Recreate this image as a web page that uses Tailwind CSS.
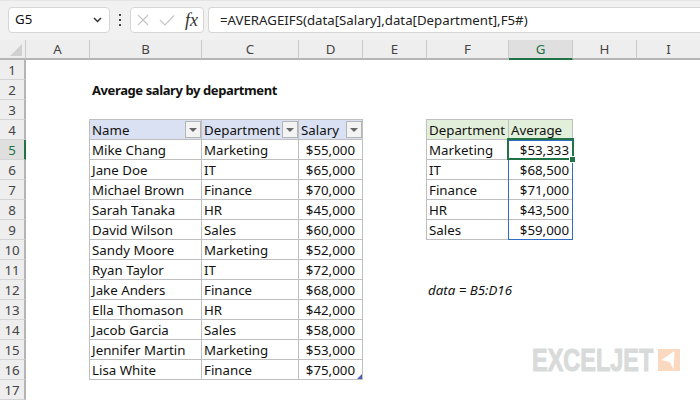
<!DOCTYPE html>
<html lang="en">
<head>
<meta charset="UTF-8">
<script src="https://cdn.jsdelivr.net/npm/@tailwindcss/browser@4"></script>
<title>Average salary by department</title>
</head>
<body class="w-[700px] h-[400px] overflow-hidden bg-white font-['Noto_Sans',sans-serif] text-[13.3px] text-[#111]">

<!-- formula bar -->
<div class="h-10 bg-[#f1f1f1] border-t border-t-[#e4e4e4] flex items-start pt-[6px] pl-2">
  <div class="w-[102px] h-[26px] bg-white border border-[#d6d6d6] rounded-[4px] flex items-center pl-[6px] pr-[7px] justify-between">
    <span>G5</span>
    <svg class="w-[9px] h-[6px]" viewBox="0 0 9 6" fill="none" stroke="#333" stroke-width="1.5"><path d="M1 1l3.5 3.5L8 1"/></svg>
  </div>
  <div class="w-5 h-[26px] flex flex-col items-center justify-center gap-[3px]">
    <i class="block w-[2px] h-[2px] bg-[#444]"></i><i class="block w-[2px] h-[2px] bg-[#444]"></i><i class="block w-[2px] h-[2px] bg-[#444]"></i>
  </div>
  <div class="w-[74px] h-[26px] bg-white border border-[#d6d6d6] rounded-[4px] flex items-center pl-[6px]">
    <svg class="w-3 h-3" viewBox="0 0 12 12" fill="none" stroke="#c4c4c4" stroke-width="1.1"><path d="M1 1l10 10M11 1L1 11"/></svg>
    <svg class="w-4 h-3 ml-[10px]" viewBox="0 0 16 12" fill="none" stroke="#c4c4c4" stroke-width="1.1"><path d="M1 6l5 5L15 1.5"/></svg>
    <span class="font-['Liberation_Serif',serif] italic text-[18px] leading-none ml-[10px] text-[#333]">fx</span>
  </div>
  <div class="ml-1 flex-1 h-[26px] bg-white border-y border-l border-[#d6d6d6] rounded-l-[4px] pl-[11px] leading-[24px] text-[13.25px] text-[#222]">=AVERAGEIFS(data[Salary],data[Department],F5#)</div>
</div>

<!-- sheet -->
<div class="relative grid grid-cols-[26px_64px_112px_97px_64px_64px_82px_64px_64px_63px] auto-rows-[20px]">
  <!-- column headers -->
  <div class="bg-[#eeeeee] border-b-2 border-[#b5b5b5] border-r border-r-[#c8c8c8] flex items-end justify-end">
    <div class="w-0 h-0 border-l-[12px] border-l-transparent border-b-[12px] border-b-[#d0d0d0] mr-[3px] mb-[2px]"></div>
  </div>
  <div class="bg-[#eeeeee] border-b-2 border-[#b5b5b5] border-r border-r-[#c8c8c8] text-center text-[#444] leading-[19px]">A</div>
  <div class="bg-[#eeeeee] border-b-2 border-[#b5b5b5] border-r border-r-[#c8c8c8] text-center text-[#444] leading-[19px]">B</div>
  <div class="bg-[#eeeeee] border-b-2 border-[#b5b5b5] border-r border-r-[#c8c8c8] text-center text-[#444] leading-[19px]">C</div>
  <div class="bg-[#eeeeee] border-b-2 border-[#b5b5b5] border-r border-r-[#c8c8c8] text-center text-[#444] leading-[19px]">D</div>
  <div class="bg-[#eeeeee] border-b-2 border-[#b5b5b5] border-r border-r-[#c8c8c8] text-center text-[#444] leading-[19px]">E</div>
  <div class="bg-[#eeeeee] border-b-2 border-[#b5b5b5] border-r border-r-[#c8c8c8] text-center text-[#444] leading-[19px]">F</div>
  <div class="bg-[#dfdfdf] border-b-2 border-[#217346] border-r border-r-[#c8c8c8] text-center text-[#217346] leading-[19px]">G</div>
  <div class="bg-[#eeeeee] border-b-2 border-[#b5b5b5] border-r border-r-[#c8c8c8] text-center text-[#444] leading-[19px]">H</div>
  <div class="bg-[#eeeeee] border-b-2 border-[#b5b5b5] text-center text-[#444] leading-[19px]">I</div>

  <!-- row 1 -->
  <div class="col-start-1 bg-[#eeeeee] border-r-2 border-r-[#b5b5b5] border-b border-b-[#d4d4d4] text-center text-[#444] leading-[21px]">1</div>
  <!-- row 2 -->
  <div class="col-start-1 bg-[#eeeeee] border-r-2 border-r-[#b5b5b5] border-b border-b-[#d4d4d4] text-center text-[#444] leading-[21px]">2</div>
  <div class="col-start-3 col-span-3 font-bold text-[13px] tracking-[-0.4px] leading-[21px] pl-[2px]">Average salary by department</div>
  <!-- row 3 -->
  <div class="col-start-1 bg-[#eeeeee] border-r-2 border-r-[#b5b5b5] border-b border-b-[#d4d4d4] text-center text-[#444] leading-[21px]">3</div>
  <!-- row 4 -->
  <div class="col-start-1 bg-[#eeeeee] border-r-2 border-r-[#b5b5b5] border-b border-b-[#d4d4d4] text-center text-[#444] leading-[21px]">4</div>
  <div class="col-start-3 -ml-px -mt-px relative bg-[#d9e1f2] border border-[#bfbfbf] pl-[2px] leading-[21px]">Name<span class="absolute right-0 top-[1px] w-4 h-[17px] bg-[#f3f3f3] border border-[#b5b5b5] flex items-center justify-center"><i class="block w-0 h-0 border-x-[4px] border-x-transparent border-t-[4px] border-t-[#666]"></i></span></div>
  <div class="-mt-px relative bg-[#d9e1f2] border-y border-r border-[#bfbfbf] pl-[2px] leading-[21px]">Department<span class="absolute right-0 top-[1px] w-4 h-[17px] bg-[#f3f3f3] border border-[#b5b5b5] flex items-center justify-center"><i class="block w-0 h-0 border-x-[4px] border-x-transparent border-t-[4px] border-t-[#666]"></i></span></div>
  <div class="-mt-px relative bg-[#d9e1f2] border-y border-r border-[#bfbfbf] pl-[2px] leading-[21px]">Salary<span class="absolute right-0 top-[1px] w-4 h-[17px] bg-[#f3f3f3] border border-[#b5b5b5] flex items-center justify-center"><i class="block w-0 h-0 border-x-[4px] border-x-transparent border-t-[4px] border-t-[#666]"></i></span></div>
  <div class="col-start-7 -ml-px -mt-px bg-[#e2efda] border border-[#bfbfbf] pl-[2px] leading-[21px]">Department</div>
  <div class="-mt-px bg-[#e2efda] border-y border-r border-[#bfbfbf] pl-[2px] leading-[21px]">Average</div>
  <!-- row 5 -->
  <div class="col-start-1 bg-[#dfdfdf] border-r-2 border-r-[#217346] border-b border-b-[#d4d4d4] text-center text-[#217346] leading-[21px]">5</div>
  <div class="col-start-3 -ml-px border-x border-b border-[#bfbfbf] pl-[2px] leading-[21px]">Mike Chang</div>
  <div class="border-r border-b border-[#bfbfbf] pl-[2px] leading-[21px]">Marketing</div>
  <div class="border-r border-b border-[#bfbfbf] pr-[7px] text-right leading-[21px]">$55,000</div>
  <div class="col-start-7 -ml-px border-x border-b border-[#bfbfbf] pl-[2px] leading-[21px]">Marketing</div>
  <div class="border-r border-b border-[#bfbfbf] pr-[3px] text-right leading-[21px]">$53,333</div>
  <!-- row 6 -->
  <div class="col-start-1 bg-[#eeeeee] border-r-2 border-r-[#b5b5b5] border-b border-b-[#d4d4d4] text-center text-[#444] leading-[21px]">6</div>
  <div class="col-start-3 -ml-px border-x border-b border-[#bfbfbf] pl-[2px] leading-[21px]">Jane Doe</div>
  <div class="border-r border-b border-[#bfbfbf] pl-[2px] leading-[21px]">IT</div>
  <div class="border-r border-b border-[#bfbfbf] pr-[7px] text-right leading-[21px]">$65,000</div>
  <div class="col-start-7 -ml-px border-x border-b border-[#bfbfbf] pl-[2px] leading-[21px]">IT</div>
  <div class="border-r border-b border-[#bfbfbf] pr-[3px] text-right leading-[21px]">$68,500</div>
  <!-- row 7 -->
  <div class="col-start-1 bg-[#eeeeee] border-r-2 border-r-[#b5b5b5] border-b border-b-[#d4d4d4] text-center text-[#444] leading-[21px]">7</div>
  <div class="col-start-3 -ml-px border-x border-b border-[#bfbfbf] pl-[2px] leading-[21px]">Michael Brown</div>
  <div class="border-r border-b border-[#bfbfbf] pl-[2px] leading-[21px]">Finance</div>
  <div class="border-r border-b border-[#bfbfbf] pr-[7px] text-right leading-[21px]">$70,000</div>
  <div class="col-start-7 -ml-px border-x border-b border-[#bfbfbf] pl-[2px] leading-[21px]">Finance</div>
  <div class="border-r border-b border-[#bfbfbf] pr-[3px] text-right leading-[21px]">$71,000</div>
  <!-- row 8 -->
  <div class="col-start-1 bg-[#eeeeee] border-r-2 border-r-[#b5b5b5] border-b border-b-[#d4d4d4] text-center text-[#444] leading-[21px]">8</div>
  <div class="col-start-3 -ml-px border-x border-b border-[#bfbfbf] pl-[2px] leading-[21px]">Sarah Tanaka</div>
  <div class="border-r border-b border-[#bfbfbf] pl-[2px] leading-[21px]">HR</div>
  <div class="border-r border-b border-[#bfbfbf] pr-[7px] text-right leading-[21px]">$45,000</div>
  <div class="col-start-7 -ml-px border-x border-b border-[#bfbfbf] pl-[2px] leading-[21px]">HR</div>
  <div class="border-r border-b border-[#bfbfbf] pr-[3px] text-right leading-[21px]">$43,500</div>
  <!-- row 9 -->
  <div class="col-start-1 bg-[#eeeeee] border-r-2 border-r-[#b5b5b5] border-b border-b-[#d4d4d4] text-center text-[#444] leading-[21px]">9</div>
  <div class="col-start-3 -ml-px border-x border-b border-[#bfbfbf] pl-[2px] leading-[21px]">David Wilson</div>
  <div class="border-r border-b border-[#bfbfbf] pl-[2px] leading-[21px]">Sales</div>
  <div class="border-r border-b border-[#bfbfbf] pr-[7px] text-right leading-[21px]">$60,000</div>
  <div class="col-start-7 -ml-px border-x border-b border-[#bfbfbf] pl-[2px] leading-[21px]">Sales</div>
  <div class="border-r border-b border-[#bfbfbf] pr-[3px] text-right leading-[21px]">$59,000</div>
  <!-- row 10 -->
  <div class="col-start-1 bg-[#eeeeee] border-r-2 border-r-[#b5b5b5] border-b border-b-[#d4d4d4] text-center text-[#444] leading-[21px]">10</div>
  <div class="col-start-3 -ml-px border-x border-b border-[#bfbfbf] pl-[2px] leading-[21px]">Sandy Moore</div>
  <div class="border-r border-b border-[#bfbfbf] pl-[2px] leading-[21px]">Marketing</div>
  <div class="border-r border-b border-[#bfbfbf] pr-[7px] text-right leading-[21px]">$52,000</div>
  <!-- row 11 -->
  <div class="col-start-1 bg-[#eeeeee] border-r-2 border-r-[#b5b5b5] border-b border-b-[#d4d4d4] text-center text-[#444] leading-[21px]">11</div>
  <div class="col-start-3 -ml-px border-x border-b border-[#bfbfbf] pl-[2px] leading-[21px]">Ryan Taylor</div>
  <div class="border-r border-b border-[#bfbfbf] pl-[2px] leading-[21px]">IT</div>
  <div class="border-r border-b border-[#bfbfbf] pr-[7px] text-right leading-[21px]">$72,000</div>
  <!-- row 12 -->
  <div class="col-start-1 bg-[#eeeeee] border-r-2 border-r-[#b5b5b5] border-b border-b-[#d4d4d4] text-center text-[#444] leading-[21px]">12</div>
  <div class="col-start-3 -ml-px border-x border-b border-[#bfbfbf] pl-[2px] leading-[21px]">Jake Anders</div>
  <div class="border-r border-b border-[#bfbfbf] pl-[2px] leading-[21px]">Finance</div>
  <div class="border-r border-b border-[#bfbfbf] pr-[7px] text-right leading-[21px]">$68,000</div>
  <div class="col-start-7 col-span-2 italic pl-[1px] leading-[21px]">data = B5:D16</div>
  <!-- row 13 -->
  <div class="col-start-1 bg-[#eeeeee] border-r-2 border-r-[#b5b5b5] border-b border-b-[#d4d4d4] text-center text-[#444] leading-[21px]">13</div>
  <div class="col-start-3 -ml-px border-x border-b border-[#bfbfbf] pl-[2px] leading-[21px]">Ella Thomason</div>
  <div class="border-r border-b border-[#bfbfbf] pl-[2px] leading-[21px]">HR</div>
  <div class="border-r border-b border-[#bfbfbf] pr-[7px] text-right leading-[21px]">$42,000</div>
  <!-- row 14 -->
  <div class="col-start-1 bg-[#eeeeee] border-r-2 border-r-[#b5b5b5] border-b border-b-[#d4d4d4] text-center text-[#444] leading-[21px]">14</div>
  <div class="col-start-3 -ml-px border-x border-b border-[#bfbfbf] pl-[2px] leading-[21px]">Jacob Garcia</div>
  <div class="border-r border-b border-[#bfbfbf] pl-[2px] leading-[21px]">Sales</div>
  <div class="border-r border-b border-[#bfbfbf] pr-[7px] text-right leading-[21px]">$58,000</div>
  <!-- row 15 -->
  <div class="col-start-1 bg-[#eeeeee] border-r-2 border-r-[#b5b5b5] border-b border-b-[#d4d4d4] text-center text-[#444] leading-[21px]">15</div>
  <div class="col-start-3 -ml-px border-x border-b border-[#bfbfbf] pl-[2px] leading-[21px]">Jennifer Martin</div>
  <div class="border-r border-b border-[#bfbfbf] pl-[2px] leading-[21px]">Marketing</div>
  <div class="border-r border-b border-[#bfbfbf] pr-[7px] text-right leading-[21px]">$53,000</div>
  <!-- row 16 -->
  <div class="col-start-1 bg-[#eeeeee] border-r-2 border-r-[#b5b5b5] border-b border-b-[#d4d4d4] text-center text-[#444] leading-[21px]">16</div>
  <div class="col-start-3 -ml-px border-x border-b border-[#bfbfbf] pl-[2px] leading-[21px]">Lisa White</div>
  <div class="border-r border-b border-[#bfbfbf] pl-[2px] leading-[21px]">Finance</div>
  <div class="relative border-r border-b border-[#bfbfbf] pr-[7px] text-right leading-[21px]">$75,000<span class="absolute right-0 bottom-0 w-0 h-0 border-l-[5px] border-l-transparent border-b-[5px] border-b-[#4a5fb5]"></span></div>
  <!-- row 17 -->
  <div class="col-start-1 bg-[#eeeeee] border-r-2 border-r-[#b5b5b5] border-b border-b-[#d4d4d4] text-center text-[#444] leading-[21px]">17</div>

  <!-- spill range and active cell sit over the grid -->
  <div class="absolute left-[508px] top-[100px] w-[65px] h-[100px] border border-[#2f6ec4] pointer-events-none"></div>
  <div class="absolute left-[507px] top-[98px] w-[67px] h-[22px] border-2 border-[#217346] pointer-events-none"></div>
  <div class="absolute left-[569px] top-[116px] w-[7px] h-[7px] bg-[#217346] border border-white pointer-events-none"></div>

  <!-- watermark -->
  <div class="absolute left-[532px] top-[309px] flex items-start pointer-events-none">
    <span class="block w-[126px] origin-left scale-x-[0.77] whitespace-nowrap font-['Liberation_Sans',sans-serif] font-bold text-[30.5px] leading-[22px] text-[#d9dada] [-webkit-text-stroke:1px_#d9dada]">EXCELJET</span>
    <svg class="w-[22px] h-[22px]" viewBox="0 0 22 22"><rect width="22" height="22" fill="#fbd9c0"/><path d="M3.5 11L16.5 2l-1 18-4-7z" fill="#fff"/></svg>
  </div>
</div>
</body>
</html>
